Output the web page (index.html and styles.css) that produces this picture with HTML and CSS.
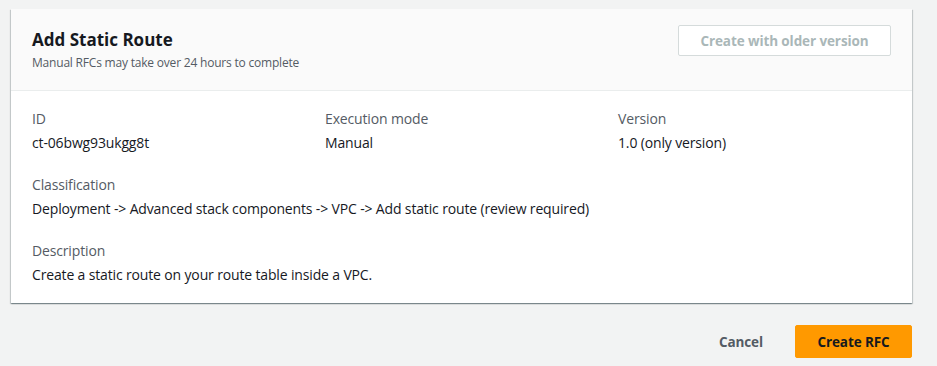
FILE: index.html
```html
<!DOCTYPE html>
<html lang="en">
<head>
<meta charset="utf-8">
<title>Add Static Route</title>
<link rel="stylesheet" href="styles.css">
</head>
<body>
<div class="page">
  <section class="card">
    <header class="card-header">
      <div class="heading">
        <h2 class="title">Add Static Route</h2>
        <p class="subtitle">Manual RFCs may take over 24 hours to complete</p>
      </div>
      <button class="btn-disabled" disabled>Create with older version</button>
    </header>
    <div class="card-body">
      <div class="columns">
        <div class="field">
          <div class="label">ID</div>
          <div class="value">ct-06bwg93ukgg8t</div>
        </div>
        <div class="field">
          <div class="label">Execution mode</div>
          <div class="value">Manual</div>
        </div>
        <div class="field">
          <div class="label">Version</div>
          <div class="value">1.0 (only version)</div>
        </div>
      </div>
      <div class="field">
        <div class="label">Classification</div>
        <div class="value">Deployment -&gt; Advanced stack components -&gt; VPC -&gt; Add static route (review required)</div>
      </div>
      <div class="field">
        <div class="label">Description</div>
        <div class="value">Create a static route on your route table inside a VPC.</div>
      </div>
    </div>
  </section>
  <div class="actions">
    <button class="btn-link">Cancel</button>
    <button class="btn-primary">Create RFC</button>
  </div>
</div>
</body>
</html>
```
FILE: styles.css
```css
* { box-sizing: border-box; }
html, body {
  margin: 0;
  padding: 0;
  background: #f2f3f3;
  font-family: "Open Sans", "Noto Sans", sans-serif;
  color: #16191f;
}
.page {
  padding: 9px 25px 0 11px;
}
.card {
  background: #fff;
  box-shadow: 0 1px 1px 0 rgba(0,28,36,0.3), 1px 1px 1px 0 rgba(0,28,36,0.15), -1px 1px 1px 0 rgba(0,28,36,0.15);
}
.card-header {
  background: #fafafa;
  border-bottom: 1px solid #eaeded;
  display: flex;
  justify-content: space-between;
  align-items: flex-start;
  padding: 16px 21px 0 21px;
  height: 82px;
}
.title {
  margin: 0;
  font-size: 17px;
  line-height: 30px;
  font-weight: 700;
}
.subtitle {
  margin: 0;
  font-size: 12px;
  line-height: 16px;
  color: #545b64;
  letter-spacing: -0.2px;
}
.btn-disabled {
  width: 213px;
  height: 31px;
  background: #fff;
  border: 1px solid #d5dbdb;
  border-radius: 2px;
  color: #aab7b8;
  font-family: inherit;
  font-size: 13.5px;
  font-weight: 700;
  letter-spacing: -0.1px;
}
.card-body {
  padding: 16px 21px 16px 21px;
  display: flex;
  flex-direction: column;
  gap: 18px;
}
.columns {
  display: grid;
  grid-template-columns: 293px 293px 1fr;
}
.label {
  font-size: 14px;
  line-height: 24px;
  color: #545b64;
  letter-spacing: -0.15px;
}
.value {
  font-size: 14px;
  line-height: 24px;
  color: #16191f;
  letter-spacing: -0.15px;
}
.actions {
  display: flex;
  justify-content: flex-end;
  align-items: center;
  gap: 12px;
  margin-top: 22px;
}
.btn-link {
  background: none;
  border: none;
  font-family: inherit;
  font-size: 13.5px;
  font-weight: 700;
  color: #545b64;
  padding: 0 20px;
  height: 32px;
  letter-spacing: -0.1px;
}
.btn-primary {
  background: #ff9900;
  border: 1px solid #ff9900;
  border-radius: 2px;
  font-family: inherit;
  font-size: 13.5px;
  font-weight: 700;
  color: #16191f;
  width: 117px;
  height: 33px;
  letter-spacing: -0.1px;
}
```
